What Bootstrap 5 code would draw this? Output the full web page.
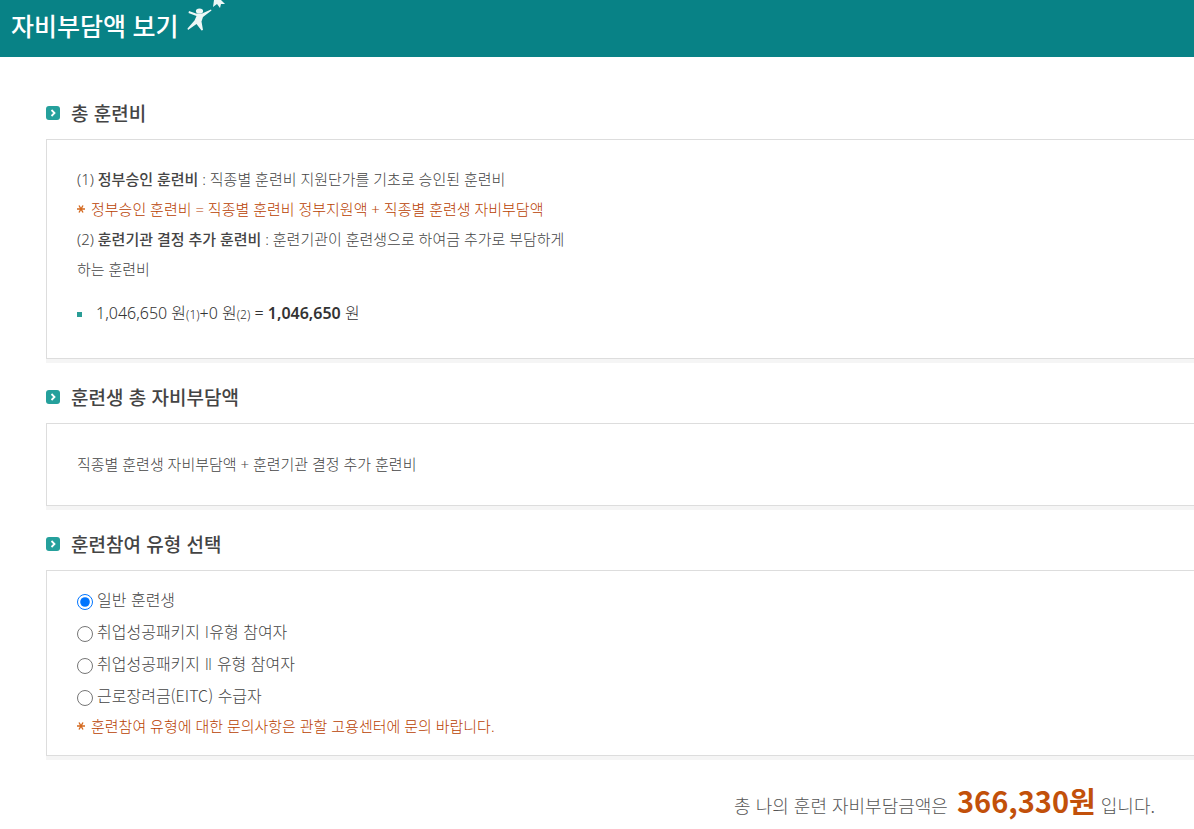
<!DOCTYPE html>
<html lang="ko">
<head>
<meta charset="utf-8">
<meta name="viewport" content="width=device-width, initial-scale=1">
<title>자비부담액 보기</title>
<link href="https://cdn.jsdelivr.net/npm/bootstrap@5.3.0/dist/css/bootstrap.min.css" rel="stylesheet">
<style>
body{font-family:"Noto Sans","Noto Sans CJK KR",sans-serif;font-size:15px;font-weight:300;line-height:30px;color:#444;word-break:keep-all}
.topbar{background:#088286;height:57px;padding-left:11px}
.topbar h1{font-size:25px;line-height:52px;font-weight:500}
.stars{width:42px;height:34px;margin-left:5px}
.content{padding:40px 0 0 46px}
.head{font-family:"Noto Sans CJK KR",sans-serif;font-size:19px;line-height:32px;font-weight:500;color:#444;margin-bottom:10px;gap:11px}
.head svg{width:14px;height:14px}
.panel{border:1px solid #ddd;border-right:0;box-shadow:0 4px 0 #f5f5f5;padding-left:30px;margin-bottom:22px}
.panel strong{font-weight:500}
.note{color:#b84000;gap:6px}
.note svg{width:8px;height:8px}
.brief{padding-top:25px;padding-bottom:26px}
.choices{padding-top:12px;padding-bottom:14px}
.sum{font-size:16px;gap:14px;margin-top:14px;margin-bottom:4px;color:#333}
.sum small{font-size:12px}
.sum strong{font-weight:600}
.dot{width:5px;height:5px;background:#2a9d96}
.opt{font-family:"Noto Sans CJK KR",sans-serif;font-size:16px;height:32px;gap:4px}
.opt input{width:16px;height:16px;margin:5px 0 0;accent-color:#0075ff}
.roman{font-family:"DejaVu Sans",sans-serif;line-height:1}
.total{font-family:"Noto Sans CJK KR",sans-serif;font-size:18px;line-height:44px;padding-right:39px;color:#555}
.total strong{font-size:29px;font-weight:700;color:#c2500a;margin-left:4px}
</style>
</head>
<body>
<header class="topbar d-flex align-items-start text-white">
<h1 class="m-0">자비부담액 보기</h1>
<svg class="stars" viewBox="0 0 42 34" fill="#eef7f6" aria-hidden="true"><ellipse cx="15.500" cy="11" rx="3.6" ry="2.6"/><path d="M5 11l7 2.500h6l9-4 .5 1-8.500 6.500-1.500 4.500 1.500 8.500-1.500.5-5-6.500-8.500 6-.5-1.500 7-8 2-4.500-8-3z"/><path d="M30 0h7l4 4-4 0-1 4-3-4-4 3z"/></svg>
</header>
<main class="content">
<section>
<h2 class="head d-flex align-items-center"><svg viewBox="0 0 14 14" aria-hidden="true"><rect width="14" height="14" rx="3" fill="#25a09c"/><path d="M5.5 4l3 3-3 3" fill="none" stroke="#fff" stroke-width="1.8"/></svg>총 훈련비</h2>
<div class="panel pb-4">
<div class="pt-4">
<p class="m-0">(1) <strong>정부승인 훈련비</strong> : 직종별 훈련비 지원단가를 기초로 승인된 훈련비</p>
<p class="note m-0 d-flex align-items-center"><svg viewBox="0 0 8 8" stroke="#d4691f" stroke-width="1.4" aria-hidden="true"><path d="M0 4h8M2 .5l4 7M6 .5l-4 7"/></svg>정부승인 훈련비 = 직종별 훈련비 정부지원액 + 직종별 훈련생 자비부담액</p>
<p class="m-0">(2) <strong>훈련기관 결정 추가 훈련비</strong> : 훈련기관이 훈련생으로 하여금 추가로 부담하게<br>하는 훈련비</p>
</div>
<p class="sum d-flex align-items-center"><span class="dot"></span><span>1,046,650 원<small>(1)</small>+0 원<small>(2)</small> = <strong>1,046,650</strong> 원</span></p>
</div>
</section>
<section>
<h2 class="head d-flex align-items-center"><svg viewBox="0 0 14 14" aria-hidden="true"><rect width="14" height="14" rx="3" fill="#25a09c"/><path d="M5.5 4l3 3-3 3" fill="none" stroke="#fff" stroke-width="1.8"/></svg>훈련생 총 자비부담액</h2>
<div class="panel brief"><p class="m-0">직종별 훈련생 자비부담액 + 훈련기관 결정 추가 훈련비</p></div>
</section>
<section>
<h2 class="head d-flex align-items-center"><svg viewBox="0 0 14 14" aria-hidden="true"><rect width="14" height="14" rx="3" fill="#25a09c"/><path d="M5.5 4l3 3-3 3" fill="none" stroke="#fff" stroke-width="1.8"/></svg>훈련참여 유형 선택</h2>
<div class="panel choices">
<div class="opt d-flex align-items-center"><input type="radio" name="type" id="t1" checked><label for="t1">일반 훈련생</label></div>
<div class="opt d-flex align-items-center"><input type="radio" name="type" id="t2"><label for="t2">취업성공패키지 <span class="roman">Ⅰ</span>유형 참여자</label></div>
<div class="opt d-flex align-items-center"><input type="radio" name="type" id="t3"><label for="t3">취업성공패키지 <span class="roman">Ⅱ</span> 유형 참여자</label></div>
<div class="opt d-flex align-items-center"><input type="radio" name="type" id="t4"><label for="t4">근로장려금(EITC) 수급자</label></div>
<p class="note m-0 d-flex align-items-center"><svg viewBox="0 0 8 8" stroke="#d4691f" stroke-width="1.4" aria-hidden="true"><path d="M0 4h8M2 .5l4 7M6 .5l-4 7"/></svg>훈련참여 유형에 대한 문의사항은 관할 고용센터에 문의 바랍니다.</p>
</div>
</section>
<p class="total m-0 text-end">총 나의 훈련 자비부담금액은 <strong>366,330원</strong> 입니다.</p>
</main>
<script src="https://cdn.jsdelivr.net/npm/bootstrap@5.3.0/dist/js/bootstrap.bundle.min.js"></script>
</body>
</html>
